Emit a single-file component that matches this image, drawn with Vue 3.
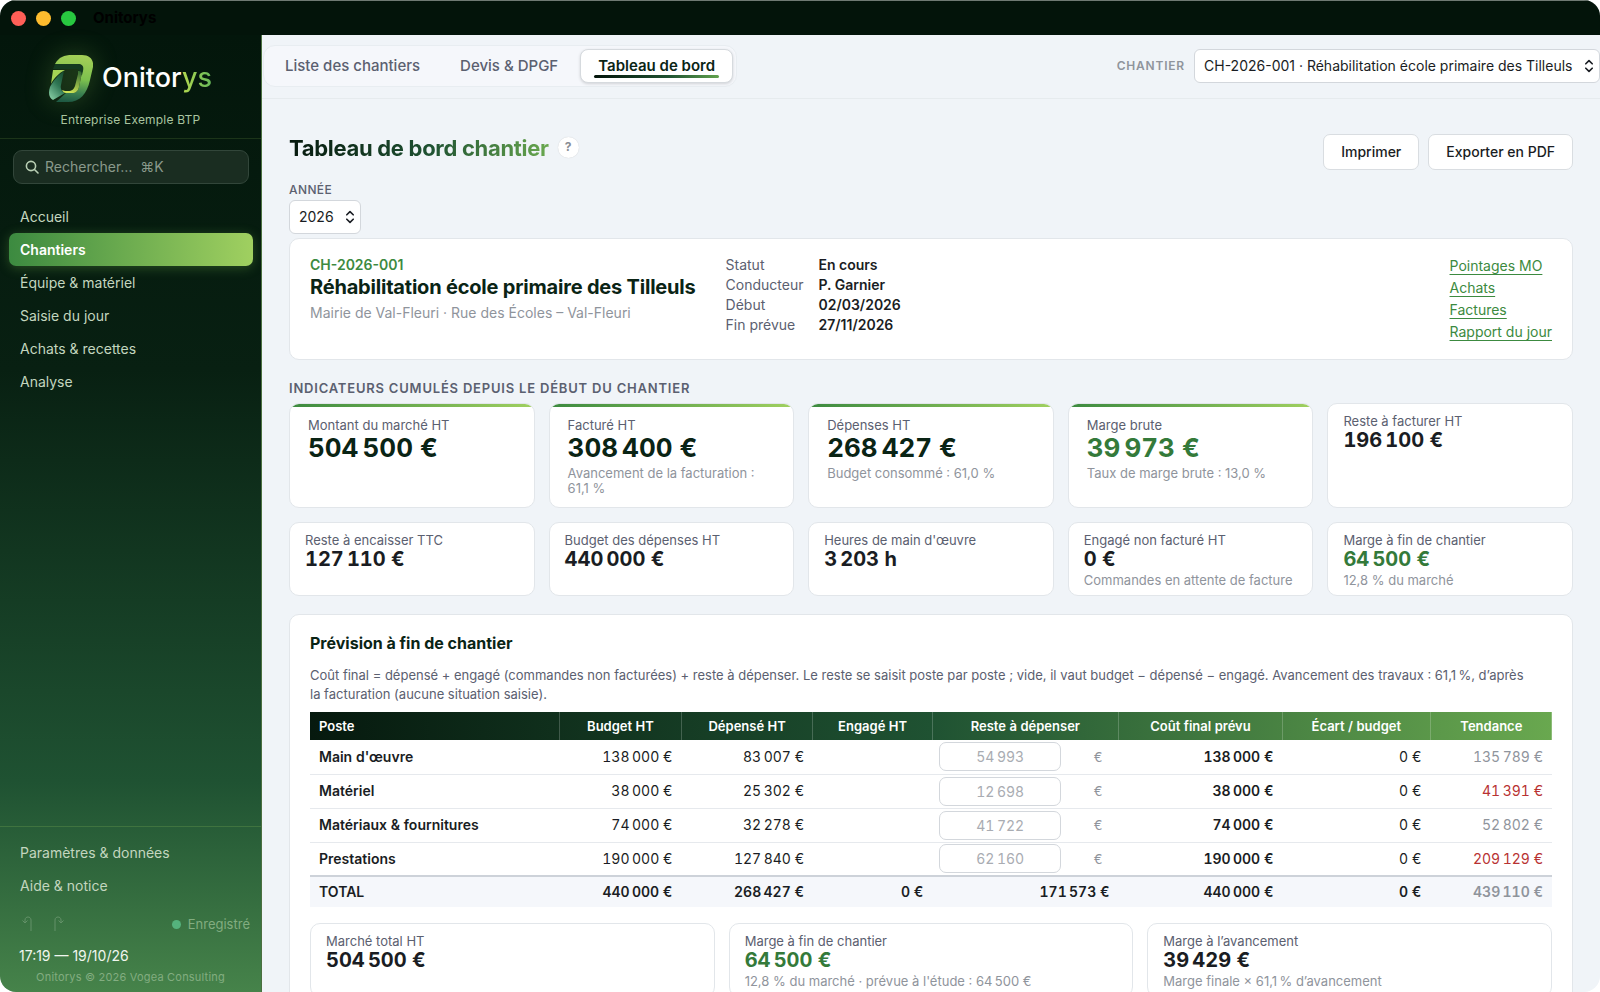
<template>
  <div class="window">
    <header class="titlebar">
      <span class="light light-red"></span>
      <span class="light light-yellow"></span>
      <span class="light light-green"></span>
      <span class="titlebar-name">Onitorys</span>
    </header>

    <div class="shell">
      <aside class="sidebar">
        <div class="brand">
          <div class="brand-row">
            <svg class="brand-logo" viewBox="0 0 44 48" aria-hidden="true">
              <defs>
                <linearGradient id="logoOuter" x1="0.5" y1="0" x2="0.4" y2="1">
                  <stop offset="0" stop-color="#a4cf57" />
                  <stop offset="0.5" stop-color="#7cc04e" />
                  <stop offset="0.8" stop-color="#3b8050" />
                  <stop offset="1" stop-color="#1f5a44" />
                </linearGradient>
                <linearGradient id="logoLeaf" x1="0.9" y1="0" x2="0.3" y2="1">
                  <stop offset="0" stop-color="#174a2c" />
                  <stop offset="0.5" stop-color="#2f7654" />
                  <stop offset="1" stop-color="#7cc39a" />
                </linearGradient>
                <linearGradient id="logoEdge" x1="1" y1="0" x2="0.5" y2="1">
                  <stop offset="0" stop-color="#2c6430" />
                  <stop offset="1" stop-color="#cbe255" />
                </linearGradient>
              </defs>
              <path d="M6 10C10 3 15 1 23 1h10c8 0 12 5 11 12l-3 13C38 40 31 48 19 48H7l10-9h6c4 0 6-2 7-6l3-15c1-5 0-8-4-8z" fill="url(#logoOuter)" />
              <path d="M6 10h23c5 0 6 3 5 7l-1 4-3-1c1-3 0-5-4-5H4z" fill="#143a20" />
              <path d="M4 16h12C10 19 5 24 2 30z" fill="#a6d455" />
              <path d="M15 17C10 20 4 27 1 33c-2 6-1 11 3 13l12-7c-3-1-5-4-4-8z" fill="url(#logoLeaf)" />
              <path d="M29 17c3 0 4 1 3.500 4L30 33c-1 4-3 6-7 6h-6c-2 0-3-1-4-3 2 1 4 1 6 1 4 0 6-2 7-5l3-12z" fill="url(#logoEdge)" />
            </svg>
            <span class="brand-name">Onitor<span>ys</span></span>
          </div>
          <p class="brand-company">Entreprise Exemple BTP</p>
        </div>

        <label class="search">
          <svg viewBox="0 0 14 14" aria-hidden="true">
            <circle cx="6" cy="6" r="4.6" />
            <path d="M9.5 9.5 13 13" />
          </svg>
          <input v-model="search" type="text" placeholder="Rechercher…  ⌘K" aria-label="Rechercher" />
        </label>

        <nav class="nav">
          <a
            v-for="item in navItems"
            :key="item"
            href="#"
            :class="{ active: item === currentNav }"
            @click.prevent="currentNav = item"
          >{{ item }}</a>
        </nav>

        <div class="sidebar-bottom">
          <nav class="nav nav-bottom">
            <a href="#">Paramètres &amp; données</a>
            <a href="#">Aide &amp; notice</a>
          </nav>
          <div class="status-row">
            <button class="history" disabled aria-label="Annuler">
              <svg viewBox="0 0 10 16"><path d="M.5 4.500 3 7l2.500-2.500M3 7V4c0-4 6-4 6 0v11" /></svg>
            </button>
            <button class="history" disabled aria-label="Rétablir">
              <svg viewBox="0 0 10 16"><path d="M9.500 4.500 7 7 4.500 4.500M7 7V4c0-4-6-4-6 0v11" /></svg>
            </button>
            <span class="saved">Enregistré</span>
          </div>
          <p class="clock">17:19 — 19/10/26</p>
          <p class="copyright">Onitorys © 2026 Vogea Consulting</p>
        </div>
      </aside>

      <main class="main">
        <div class="topbar">
          <div class="tabs">
            <button
              v-for="tab in tabs"
              :key="tab"
              class="tab"
              :class="{ active: tab === currentTab }"
              @click="currentTab = tab"
            ><span>{{ tab }}</span></button>
          </div>
          <div class="site-picker">
            <label for="chantier">Chantier</label>
            <div class="select">
              <select id="chantier" v-model="site">
                <option>CH-2026-001 · Réhabilitation école primaire des Tilleuls</option>
              </select>
              <svg viewBox="0 0 8 14" aria-hidden="true"><path d="M.8 4.800 4 1.600l3.200 3.200M.8 9.200 4 12.400l3.200-3.200" /></svg>
            </div>
          </div>
        </div>

        <div class="content">
          <div class="page-head">
            <h1>Tableau de bord chantier</h1>
            <button class="help" aria-label="Aide">?</button>
            <div class="actions">
              <button class="btn">Imprimer</button>
              <button class="btn">Exporter en PDF</button>
            </div>
          </div>

          <div class="year">
            <label for="annee">Année</label>
            <div class="select">
              <select id="annee" v-model="year">
                <option>2026</option>
              </select>
              <svg viewBox="0 0 8 14" aria-hidden="true"><path d="M.8 4.800 4 1.600l3.200 3.200M.8 9.200 4 12.400l3.200-3.200" /></svg>
            </div>
          </div>

          <section class="card site">
            <div class="site-id">
              <p class="site-code">CH-2026-001</p>
              <h2>Réhabilitation école primaire des Tilleuls</h2>
              <p class="site-place">Mairie de Val-Fleuri · Rue des Écoles – Val-Fleuri</p>
            </div>
            <dl class="site-facts">
              <template v-for="fact in facts" :key="fact.label">
                <dt>{{ fact.label }}</dt>
                <dd>{{ fact.value }}</dd>
              </template>
            </dl>
            <div class="site-links">
              <a v-for="link in links" :key="link" href="#">{{ link }}</a>
            </div>
          </section>

          <h3 class="section-label">Indicateurs cumulés depuis le début du chantier</h3>
          <div class="kpis">
            <div v-for="kpi in kpis" :key="kpi.label" class="card kpi" :class="{ main: kpi.main, good: kpi.good }">
              <p class="kpi-label">{{ kpi.label }}</p>
              <p class="kpi-value">{{ kpi.value }}</p>
              <p v-if="kpi.note" class="kpi-note">{{ kpi.note }}</p>
            </div>
          </div>

          <section class="card forecast">
            <h3>Prévision à fin de chantier</h3>
            <p class="forecast-text">
              Coût final = dépensé + engagé (commandes non facturées) + reste à dépenser. Le reste se saisit poste par poste ; vide, il vaut budget − dépensé − engagé. Avancement des travaux : 61,1&#8239;%, d’après la&nbsp;facturation (aucune situation saisie).
            </p>
            <table>
              <colgroup>
                <col v-for="col in columns" :key="col.label" :style="{ width: col.width + '%' }" />
              </colgroup>
              <thead>
                <tr>
                  <th v-for="col in columns" :key="col.label" scope="col">{{ col.label }}</th>
                </tr>
              </thead>
              <tbody>
                <tr v-for="row in rows" :key="row.name">
                  <th scope="row">{{ row.name }}</th>
                  <td>{{ euros(row.budget) }}</td>
                  <td>{{ euros(row.spent) }}</td>
                  <td></td>
                  <td class="cell-input">
                    <div>
                      <input v-model="row.left" type="text" :placeholder="group(row.auto)" :aria-label="'Reste à dépenser : ' + row.name" />
                      <span>€</span>
                    </div>
                  </td>
                  <td class="strong">{{ euros(row.budget) }}</td>
                  <td>{{ euros(0) }}</td>
                  <td class="trend" :class="{ over: row.trend > row.budget }">{{ euros(row.trend) }}</td>
                </tr>
              </tbody>
              <tfoot>
                <tr>
                  <th scope="row">TOTAL</th>
                  <td>{{ euros(440000) }}</td>
                  <td>{{ euros(268427) }}</td>
                  <td>{{ euros(0) }}</td>
                  <td>{{ euros(171573) }}</td>
                  <td>{{ euros(440000) }}</td>
                  <td>{{ euros(0) }}</td>
                  <td class="trend">{{ euros(439110) }}</td>
                </tr>
              </tfoot>
            </table>

            <div class="kpis summary">
              <div v-for="kpi in summary" :key="kpi.label" class="card kpi" :class="{ good: kpi.good }">
                <p class="kpi-label">{{ kpi.label }}</p>
                <p class="kpi-value">{{ kpi.value }}</p>
                <p v-if="kpi.note" class="kpi-note">{{ kpi.note }}</p>
              </div>
            </div>
          </section>
        </div>
      </main>
    </div>
  </div>
</template>

<script setup>
import { ref } from "vue";

const search = ref("");
const currentNav = ref("Chantiers");
const currentTab = ref("Tableau de bord");
const site = ref("CH-2026-001 · Réhabilitation école primaire des Tilleuls");
const year = ref("2026");

const navItems = ["Accueil", "Chantiers", "Équipe & matériel", "Saisie du jour", "Achats & recettes", "Analyse"];
const tabs = ["Liste des chantiers", "Devis & DPGF", "Tableau de bord"];
const links = ["Pointages MO", "Achats", "Factures", "Rapport du jour"];

const facts = [
  { label: "Statut", value: "En cours" },
  { label: "Conducteur", value: "P. Garnier" },
  { label: "Début", value: "02/03/2026" },
  { label: "Fin prévue", value: "27/11/2026" },
];

// espace fine insécable entre les milliers
const group = (n) => String(n).replace(/\B(?=(\d{3})+$)/g, "\u202f");
const euros = (n) => group(n) + "\u00a0€";

const kpis = [
  { label: "Montant du marché HT", value: euros(504500), main: true },
  { label: "Facturé HT", value: euros(308400), note: "Avancement de la facturation : 61,1\u00a0%", main: true },
  { label: "Dépenses HT", value: euros(268427), note: "Budget consommé : 61,0\u00a0%", main: true },
  { label: "Marge brute", value: euros(39973), note: "Taux de marge brute : 13,0\u00a0%", main: true, good: true },
  { label: "Reste à facturer HT", value: euros(196100) },
  { label: "Reste à encaisser TTC", value: euros(127110) },
  { label: "Budget des dépenses HT", value: euros(440000) },
  { label: "Heures de main d'œuvre", value: group(3203) + "\u00a0h" },
  { label: "Engagé non facturé HT", value: euros(0), note: "Commandes en attente de facture" },
  { label: "Marge à fin de chantier", value: euros(64500), note: "12,8 % du marché", good: true },
];

const summary = [
  { label: "Marché total HT", value: euros(504500) },
  { label: "Marge à fin de chantier", value: euros(64500), note: "12,8 % du marché · prévue à l'étude : " + euros(64500), good: true },
  { label: "Marge à l’avancement", value: euros(39429), note: "Marge finale × 61,1\u202f% d’avancement" },
];

const columns = [
  { label: "Poste", width: 20.1 },
  { label: "Budget HT", width: 9.8 },
  { label: "Dépensé HT", width: 10.6 },
  { label: "Engagé HT", width: 9.6 },
  { label: "Reste à dépenser", width: 15 },
  { label: "Coût final prévu", width: 13.2 },
  { label: "Écart / budget", width: 11.9 },
  { label: "Tendance", width: 9.8 },
];

const rows = ref([
  { name: "Main d'œuvre", budget: 138000, spent: 83007, auto: 54993, left: "", trend: 135789 },
  { name: "Matériel", budget: 38000, spent: 25302, auto: 12698, left: "", trend: 41391 },
  { name: "Matériaux & fournitures", budget: 74000, spent: 32278, auto: 41722, left: "", trend: 52802 },
  { name: "Prestations", budget: 190000, spent: 127840, auto: 62160, left: "", trend: 209129 },
]);
</script>

<style>
body {
  margin: 0;
  background: #fff;
}
</style>

<style scoped>
.window {
  display: flex;
  flex-direction: column;
  height: 100vh;
  overflow: hidden;
  border-radius: 16px;
  background: #f0f4f8;
  color: #1a1d23;
  font-family: Inter, "Liberation Sans", sans-serif;
  font-size: 14px;
  line-height: 20px;
}

*,
*::before,
*::after {
  box-sizing: border-box;
}

p,
h1,
h2,
h3,
dl,
dd {
  margin: 0;
}

button,
input,
select {
  font: inherit;
  color: inherit;
}

.titlebar {
  display: flex;
  align-items: center;
  flex-shrink: 0;
  gap: 10px;
  height: 35px;
  padding-left: 11px;
  background: #03140a;
  border-top: 1px solid #6f7a73;
}

.light {
  width: 15px;
  height: 15px;
  border-radius: 50%;
}

.light-red {
  background: #ff5f57;
}

.light-yellow {
  background: #febc2e;
}

.light-green {
  background: #28c840;
}

.titlebar-name {
  margin-left: 7px;
  color: #000;
  font-size: 15px;
  font-weight: 700;
}

.shell {
  display: flex;
  flex: 1;
  min-height: 0;
}

/* sidebar */
.sidebar {
  display: flex;
  flex-direction: column;
  flex: 0 0 262px;
  border-right: 1px solid #4b7040;
  background: linear-gradient(180deg, #03160b 0%, #082012 35%, #1f5232 78%, #46834a 100%);
  color: #c3d6bf;
}

.brand {
  padding: 19px 0 8px;
  border-bottom: 1px solid rgba(160, 208, 96, 0.15);
  text-align: center;
}

.brand-row {
  display: flex;
  align-items: center;
  justify-content: center;
  gap: 9px;
}

.brand-logo {
  width: 44px;
  height: 48px;
  filter: drop-shadow(0 0 12px rgba(140, 200, 80, 0.3));
}

.brand-name {
  color: #fff;
  font-size: 27px;
  font-weight: 500;
  line-height: 48px;
}

.brand-name span {
  background: linear-gradient(90deg, #b3d84f, #66b95a);
  background-clip: text;
  color: transparent;
}

.brand-company {
  margin-top: 8px;
  color: #a9c5a0;
  font-size: 12px;
  letter-spacing: 0.2px;
}

.search {
  display: flex;
  align-items: center;
  gap: 6px;
  height: 34px;
  margin: 11px 12px 16px 13px;
  padding: 0 11px;
  border: 1px solid #32463a;
  border-radius: 9px;
  background: #1a2d21;
}

.search svg {
  width: 14px;
  height: 14px;
  flex-shrink: 0;
  fill: none;
  stroke: #b9cfb4;
  stroke-width: 1.6;
  stroke-linecap: round;
}

.search input {
  width: 100%;
  min-width: 0;
  padding: 0;
  border: 0;
  outline: 0;
  background: none;
  white-space: pre;
}

.search input::placeholder {
  color: #8a9a8c;
  opacity: 1;
}

.nav {
  display: flex;
  flex-direction: column;
  padding: 0 8px 0 9px;
}

.nav a {
  padding: 7px 11px 6px;
  border-radius: 7px;
  color: #c3d6bf;
  text-decoration: none;
}

.nav a.active {
  background: linear-gradient(90deg, #3c8a40, #a0d060);
  box-shadow: 0 2px 12px rgba(120, 190, 80, 0.3);
  color: #fff;
  font-weight: 600;
}

.sidebar-bottom {
  margin-top: auto;
  padding-bottom: 5px;
  border-top: 1px solid rgba(160, 208, 96, 0.2);
}

.nav-bottom {
  padding-top: 9px;
}

.status-row {
  display: flex;
  align-items: center;
  gap: 22px;
  padding: 12px 11px 12px 22px;
}

.history {
  display: flex;
  padding: 0;
  border: 0;
  background: none;
  opacity: 0.3;
}

.history svg {
  width: 10px;
  height: 16px;
  fill: none;
  stroke: #c3d6bf;
}

.saved {
  display: flex;
  align-items: center;
  gap: 7px;
  margin-left: auto;
  color: #82ad80;
  font-size: 13px;
}

.saved::before {
  content: "";
  width: 9px;
  height: 9px;
  border-radius: 50%;
  background: #55b27c;
}

.clock {
  margin-bottom: 1px;
  padding-left: 19px;
  color: #f0f6ee;
}

.copyright {
  color: #82ad80;
  font-size: 11px;
  letter-spacing: 0.2px;
  text-align: center;
}

/* barre du haut */
.main {
  flex: 1;
  min-width: 0;
  overflow: hidden;
}

.topbar {
  display: flex;
  align-items: center;
  justify-content: space-between;
  padding: 10px 0 11px 1px;
  border-bottom: 1px solid #e6ebee;
}

.tabs {
  display: flex;
  gap: 4px;
  padding: 3px;
  border: 1px solid #e8edf1;
  border-radius: 12px;
  background: #f5f7fb;
}

.tab {
  padding: 6px 17px;
  border: 1px solid transparent;
  border-radius: 8px;
  background: none;
  color: #5b6070;
  font-size: 15px;
  font-weight: 500;
}

.tab span {
  position: relative;
  display: block;
}

.tab.active {
  border-color: #d6dade;
  background: #fff;
  box-shadow: 0 1px 3px rgba(0, 0, 0, 0.15);
  color: #0a2415;
  font-weight: 600;
}

.tab.active span::after {
  content: "";
  position: absolute;
  right: -4px;
  bottom: -2px;
  left: -4px;
  height: 3px;
  border-radius: 2px;
  background: linear-gradient(90deg, #03140a, #1f5232 60%, #62a34e);
}

.site-picker {
  display: flex;
  align-items: center;
  gap: 9px;
}

.site-picker label {
  color: #8f949c;
  font-size: 12px;
  font-weight: 600;
  letter-spacing: 0.8px;
  text-transform: uppercase;
}

.select {
  position: relative;
  display: inline-block;
}

.select select {
  display: block;
  height: 34px;
  padding: 0 26px 0 9px;
  border: 1px solid #d3d7dc;
  border-radius: 6px;
  background: #fff;
  appearance: none;
}

.select svg {
  position: absolute;
  top: 10px;
  right: 7px;
  width: 8px;
  height: 14px;
  fill: none;
  stroke: #1a1d23;
  stroke-width: 1.6;
  stroke-linecap: round;
  stroke-linejoin: round;
  pointer-events: none;
}

/* page */
.content {
  padding: 35px 27px 0;
}

.page-head {
  display: flex;
  align-items: center;
  height: 36px;
}

h1 {
  padding-bottom: 8px;
  background: linear-gradient(90deg, #06190e, #1f5232 55%, #69a84f);
  background-clip: text;
  color: transparent;
  font-size: 22px;
  font-weight: 700;
  line-height: 28px;
  letter-spacing: -0.3px;
}

.help {
  width: 21px;
  height: 21px;
  margin: 0 0 10px 9px;
  padding: 0;
  border: 0;
  border-radius: 50%;
  background: #fff;
  box-shadow: 0 0 1px rgba(0, 0, 0, 0.2);
  color: #888d95;
  font-size: 12px;
  font-weight: 700;
}

.actions {
  display: flex;
  gap: 9px;
  margin-left: auto;
}

.btn {
  height: 36px;
  padding: 0 17px;
  border: 1px solid #d9dde1;
  border-radius: 7px;
  background: #fff;
  font-weight: 500;
}

.year {
  margin-top: 11px;
}

.year label {
  display: block;
  margin-bottom: 1px;
  color: #5b6070;
  font-size: 12px;
  font-weight: 500;
  line-height: 18px;
  letter-spacing: 0.4px;
  text-transform: uppercase;
}

.card {
  border: 1px solid #e2e6ea;
  border-radius: 10px;
  background: #fff;
}

.site {
  display: flex;
  gap: 30px;
  margin-top: 4px;
  padding: 16px 20px;
}

.site-code {
  color: #3c8a40;
  font-weight: 600;
}

h2 {
  color: #0a2415;
  font-size: 20px;
  font-weight: 700;
  line-height: 24px;
  letter-spacing: -0.2px;
}

.site-place {
  margin-top: 3px;
  color: #8f949c;
  line-height: 22px;
}

.site-facts {
  display: grid;
  grid-template-columns: auto auto;
  align-content: start;
  column-gap: 15px;
}

.site-facts dt {
  color: #5b6070;
}

.site-facts dd {
  font-weight: 600;
}

.site-links {
  display: flex;
  flex-direction: column;
  margin-left: auto;
}

.site-links a {
  color: #3c8a40;
  line-height: 22px;
  text-underline-offset: 3px;
}

.section-label {
  margin: 18px 0 5px;
  color: #5b6070;
  font-size: 13px;
  font-weight: 600;
  letter-spacing: 0.8px;
  text-transform: uppercase;
}

.kpis {
  display: grid;
  grid-template-columns: repeat(5, 1fr);
  gap: 14px;
}

.kpi {
  position: relative;
  padding: 9px 15px 7px;
  overflow: hidden;
}

.kpi.main {
  padding: 13px 18px 11px;
}

.kpi.main::before {
  content: "";
  position: absolute;
  top: 0;
  right: 0;
  left: 0;
  height: 3px;
  background: linear-gradient(90deg, #3c8a40, #a0d060);
}

.kpi-label {
  color: #5b6070;
  font-size: 13px;
  line-height: 16px;
}

.kpi-value {
  font-size: 20px;
  font-weight: 700;
  line-height: 22px;
  font-variant-numeric: tabular-nums;
}

.kpi.main .kpi-value {
  color: #0a2415;
  font-size: 26px;
  line-height: 30px;
}

.kpi.good .kpi-value,
.kpi.main.good .kpi-value {
  color: #347a3a;
}

.kpi-note {
  margin-top: 3px;
  color: #8f949c;
  font-size: 13px;
  line-height: 15px;
}

.forecast {
  margin-top: 18px;
  padding: 16px 20px;
}

.forecast h3 {
  color: #0a2415;
  font-size: 16px;
  font-weight: 700;
  line-height: 24px;
}

.forecast-text {
  margin: 11px 0 8px;
  color: #5b6070;
  font-size: 13px;
  line-height: 19px;
}

table {
  width: 100%;
  border-collapse: collapse;
  table-layout: fixed;
  font-variant-numeric: tabular-nums;
}

thead tr {
  background: linear-gradient(90deg, #06190e, #1f5232 50%, #69a84f);
}

thead th {
  height: 28px;
  padding: 0 9px;
  border-right: 1px solid rgba(255, 255, 255, 0.2);
  color: #fff;
  font-size: 13px;
  font-weight: 600;
}

thead th:first-child,
tbody th,
tfoot th {
  text-align: left;
}

thead th:last-child {
  border-right: 0;
}

tbody th,
tfoot th {
  padding: 0 9px;
  font-weight: 600;
}

tbody td,
tfoot td {
  padding: 0 9px;
  text-align: right;
}

tbody tr {
  height: 34px;
  border-bottom: 1px solid #e6e9ed;
}

tbody .cell-input {
  padding: 0 16px 0 7px;
}

.cell-input div {
  display: flex;
  align-items: center;
  justify-content: space-between;
  color: #8f949c;
  font-size: 13px;
}

.cell-input input {
  width: 122px;
  height: 29px;
  padding: 0;
  border: 1px solid #d3d7dc;
  border-radius: 7px;
  background: #fff;
  font-size: 14px;
  text-align: center;
}

.cell-input input::placeholder {
  color: #a9acb2;
  opacity: 1;
}

.strong,
tfoot td {
  font-weight: 600;
}

.trend {
  color: #8f949c;
}

.trend.over {
  color: #b83232;
}

tfoot tr {
  height: 31px;
  border-top: 2px solid #cdd2d9;
  background: #f5f7fb;
}

.summary {
  grid-template-columns: repeat(3, 1fr);
  margin-top: 16px;
}
</style>
